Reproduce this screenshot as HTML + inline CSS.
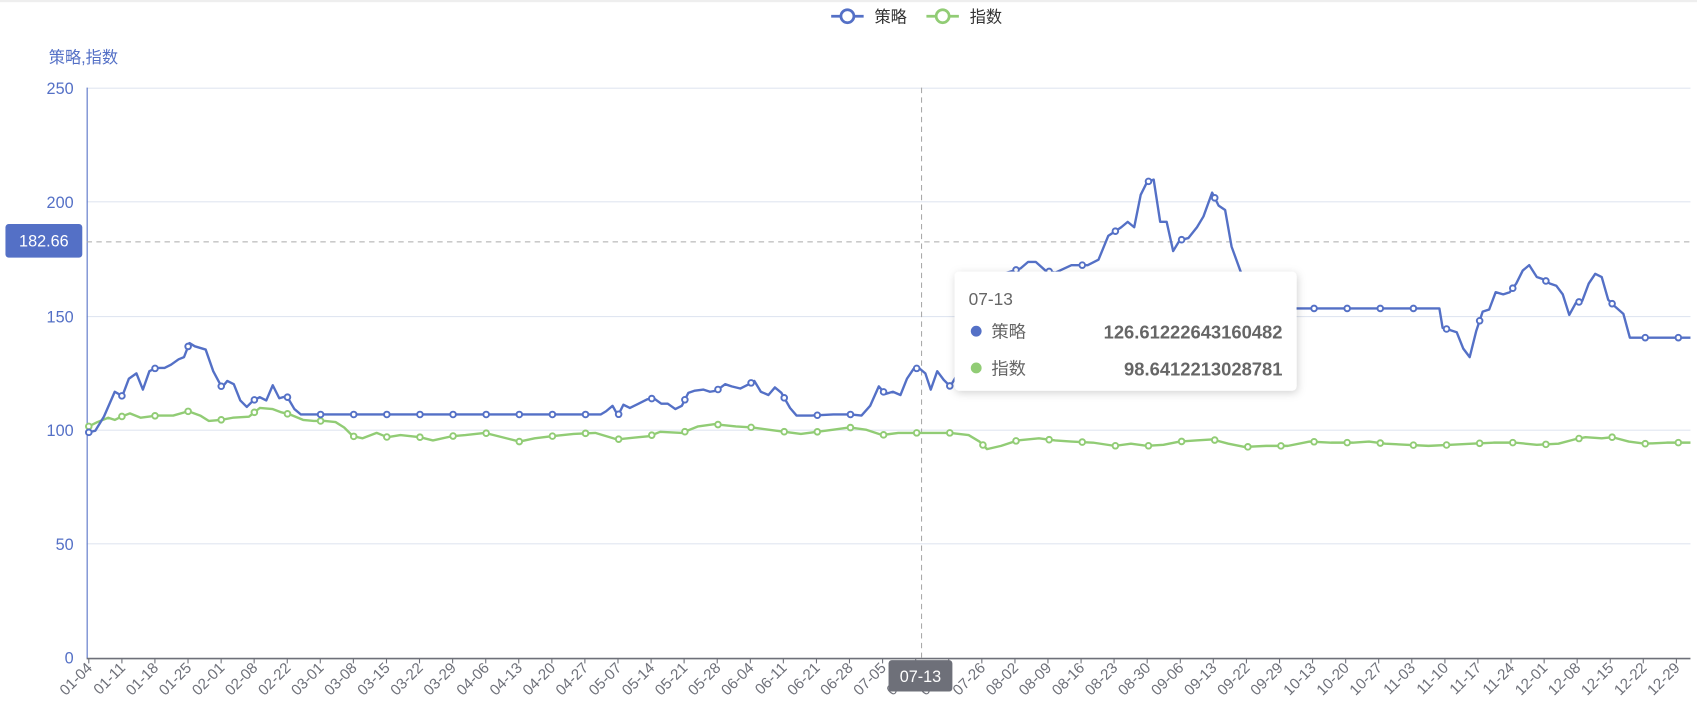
<!DOCTYPE html>
<html><head><meta charset="utf-8"><style>
html,body{margin:0;padding:0;background:#fff;width:1697px;height:720px;overflow:hidden;font-family:"Liberation Sans","Noto Sans CJK SC",sans-serif}
</style></head><body>
<svg id="s" width="1697" height="720" viewBox="0 0 1568 665.3" xmlns="http://www.w3.org/2000/svg" style="position:absolute;left:0;top:0">
<rect x="0" y="0" width="1568" height="2" fill="#eee"/>
<g stroke="#e0e6f1" stroke-width="1">
<line x1="80" y1="81.5" x2="1562" y2="81.5"/><line x1="80" y1="186.5" x2="1562" y2="186.5"/>
<line x1="80" y1="292.5" x2="1562" y2="292.5"/><line x1="80" y1="397.5" x2="1562" y2="397.5"/>
<line x1="80" y1="502.5" x2="1562" y2="502.5"/></g>
<g font-size="15" fill="#5470c6" text-anchor="end">
<text x="68" y="87">250</text><text x="68" y="192">200</text><text x="68" y="298">150</text>
<text x="68" y="403">100</text><text x="68" y="508">50</text><text x="68" y="613">0</text></g>
<text x="45" y="58" font-size="15" fill="#5470c6">策略,指数</text>
<line x1="80.5" y1="81" x2="80.5" y2="608" stroke="#5470c6"/>
<line x1="80" y1="608.5" x2="1562" y2="608.5" stroke="#6e7079" stroke-width="1.5"/>
<g id="ticks"></g>
<line x1="80" y1="223.5" x2="1562" y2="223.5" stroke="#aaa" stroke-dasharray="5,4"/>
<line x1="851.5" y1="81" x2="851.5" y2="608" stroke="#aaa" stroke-dasharray="5,4"/>
<g id="lines"></g>
<line x1="768" y1="15" x2="798" y2="15" stroke="#5470c6" stroke-width="2.5"/><circle cx="783" cy="15" r="6" fill="#fff" stroke="#5470c6" stroke-width="2.5"/>
<text x="808" y="21" font-size="15" fill="#333">策略</text>
<line x1="856" y1="15" x2="886" y2="15" stroke="#91cc75" stroke-width="2.5"/><circle cx="871" cy="15" r="6" fill="#fff" stroke="#91cc75" stroke-width="2.5"/>
<text x="896" y="21" font-size="15" fill="#333">指数</text>
<rect x="5" y="207" width="71" height="31" rx="3" fill="#5470c6"/>
<text x="40.5" y="228" font-size="15" fill="#fff" text-anchor="middle">182.66</text>
<rect x="821" y="610" width="59" height="29" rx="3" fill="#6e7079"/>
<text x="850.5" y="630" font-size="15" fill="#fff" text-anchor="middle">07-13</text>
<defs><filter id="sh" x="-10%" y="-20%" width="120%" height="140%"><feDropShadow dx="1" dy="2" stdDeviation="4" flood-color="#000" flood-opacity="0.18"/></filter></defs>
<rect x="882" y="251" width="316" height="110" rx="4" fill="#fff" filter="url(#sh)"/>
<text x="895" y="282" font-size="16" fill="#666">07-13</text>
<circle cx="902" cy="306" r="5" fill="#5470c6"/>
<text x="916" y="312" font-size="16" fill="#666">策略</text>
<text x="1185" y="313" font-size="17" font-weight="bold" fill="#666" text-anchor="end">126.61222643160482</text>
<circle cx="902" cy="340" r="5" fill="#91cc75"/>
<text x="916" y="346" font-size="16" fill="#666">指数</text>
<text x="1185" y="347" font-size="17" font-weight="bold" fill="#666" text-anchor="end">98.6412213028781</text>
</svg>
<script>
var A=[80,400,88,398,96,385,106,362,113,366,119,350,126,345,132,360,138,343,144,340,152,340,158,337,165,332,170,330,175,317,180,320,190,323,197,343,205,358,210,352,216,355,222,370,228,376,234,370,240,367,246,370,252,356,258,368,265,366,272,378,278,383,555,383,560,380,566,375,571,384,576,374,582,377,590,373,598,369,604,368,611,373,617,373,624,378,630,375,636,363,642,361,650,360,656,362,662,361,670,355,676,357,684,359,692,355,697,352,703,362,710,365,716,358,722,363,730,377,736,384,750,384,770,383,786,383,796,384,804,375,812,357,818,364,825,362,832,365,838,350,844,341,849,340,855,345,860,360,866,343,872,351,878,357,884,347,895,330,905,300,915,280,925,262,930,252,937,250,943,248,950,242,957,242,966,250,975,252,990,245,1005,245,1015,240,1024,218,1030,214,1036,210,1042,205,1048,210,1054,180,1060,168,1066,166,1072,205,1078,205,1084,232,1090,222,1098,220,1106,210,1112,200,1120,178,1126,190,1132,194,1138,228,1146,250,1152,267,1160,285,1330,285,1333,303,1340,305,1346,307,1352,322,1358,330,1364,306,1370,288,1376,286,1382,270,1389,272,1395,270,1401,262,1407,250,1413,245,1420,256,1426,258,1432,262,1438,264,1444,272,1450,291,1456,280,1462,278,1468,262,1474,253,1480,256,1486,277,1492,283,1500,290,1506,312,1520,312,1562,312];
var B=[80,395,90,390,100,386,106,388,112,385,120,382,130,386,145,384,160,384,174,380,185,384,193,389,204,388,215,386,230,385,240,377,252,378,260,381,268,383,280,388,290,389,300,389,310,390,318,395,326,403,335,405,348,400,358,404,370,402,388,404,400,407,418,403,430,402,448,400,460,403,480,408,494,405,510,403,530,401,550,400,570,406,590,404,600,403,610,399,630,400,645,394,660,392,680,394,695,395,710,397,725,399,740,401,755,399,770,397,785,395,800,397,815,402,830,400,850,400,865,400,878,400,895,402,905,408,912,415,925,412,940,407,960,405,975,407,990,408,1010,409,1030,412,1045,410,1060,412,1075,411,1090,408,1105,407,1120,406,1135,410,1150,413,1170,412,1190,412,1210,408,1230,409,1250,409,1265,408,1280,410,1300,411,1320,412,1340,411,1360,410,1380,409,1400,409,1420,411,1440,410,1455,406,1465,404,1480,405,1490,404,1505,408,1520,410,1540,409,1562,409];
function interp(P,x){for(var i=0;i<P.length-2;i+=2){if(x>=P[i]&&x<=P[i+2]){var t=(x-P[i])/((P[i+2]-P[i])||1);return P[i+1]+t*(P[i+3]-P[i+1]);}}return P[P.length-1];}
var h='';
function series(P,c){var pts='';for(var i=0;i<P.length;i+=2)pts+=P[i]+','+P[i+1]+' ';
h+='<polyline points="'+pts+'" fill="none" stroke="'+c+'" stroke-width="2.2" stroke-linejoin="round"/>';
for(var x=82;x<1562;x+=30.6){h+='<circle cx="'+x.toFixed(1)+'" cy="'+interp(P,x).toFixed(1)+'" r="2.6" fill="#fff" stroke="'+c+'" stroke-width="1.8"/>';}}
series(B,'#91cc75');series(A,'#5470c6');
document.getElementById('lines').innerHTML=h;
var L="01-04,01-11,01-18,01-25,02-01,02-08,02-22,03-01,03-08,03-15,03-22,03-29,04-06,04-13,04-20,04-27,05-07,05-14,05-21,05-28,06-04,06-11,06-21,06-28,07-05,07-13,07-19,07-26,08-02,08-09,08-16,08-23,08-30,09-06,09-13,09-22,09-29,10-13,10-20,10-27,11-03,11-10,11-17,11-24,12-01,12-08,12-15,12-22,12-29".split(',');
var t='';var step=(1549-82)/48;
for(var i=0;i<L.length;i++){var x=82+i*step;t+='<line x1="'+x.toFixed(1)+'" y1="608" x2="'+x.toFixed(1)+'" y2="613" stroke="#6e7079"/>';
t+='<text transform="translate('+(x+4).toFixed(1)+',618) rotate(-45)" font-size="14" fill="#6e7079" text-anchor="end">'+L[i]+'</text>';}
document.getElementById('ticks').innerHTML=t;
</script>
</body></html>
